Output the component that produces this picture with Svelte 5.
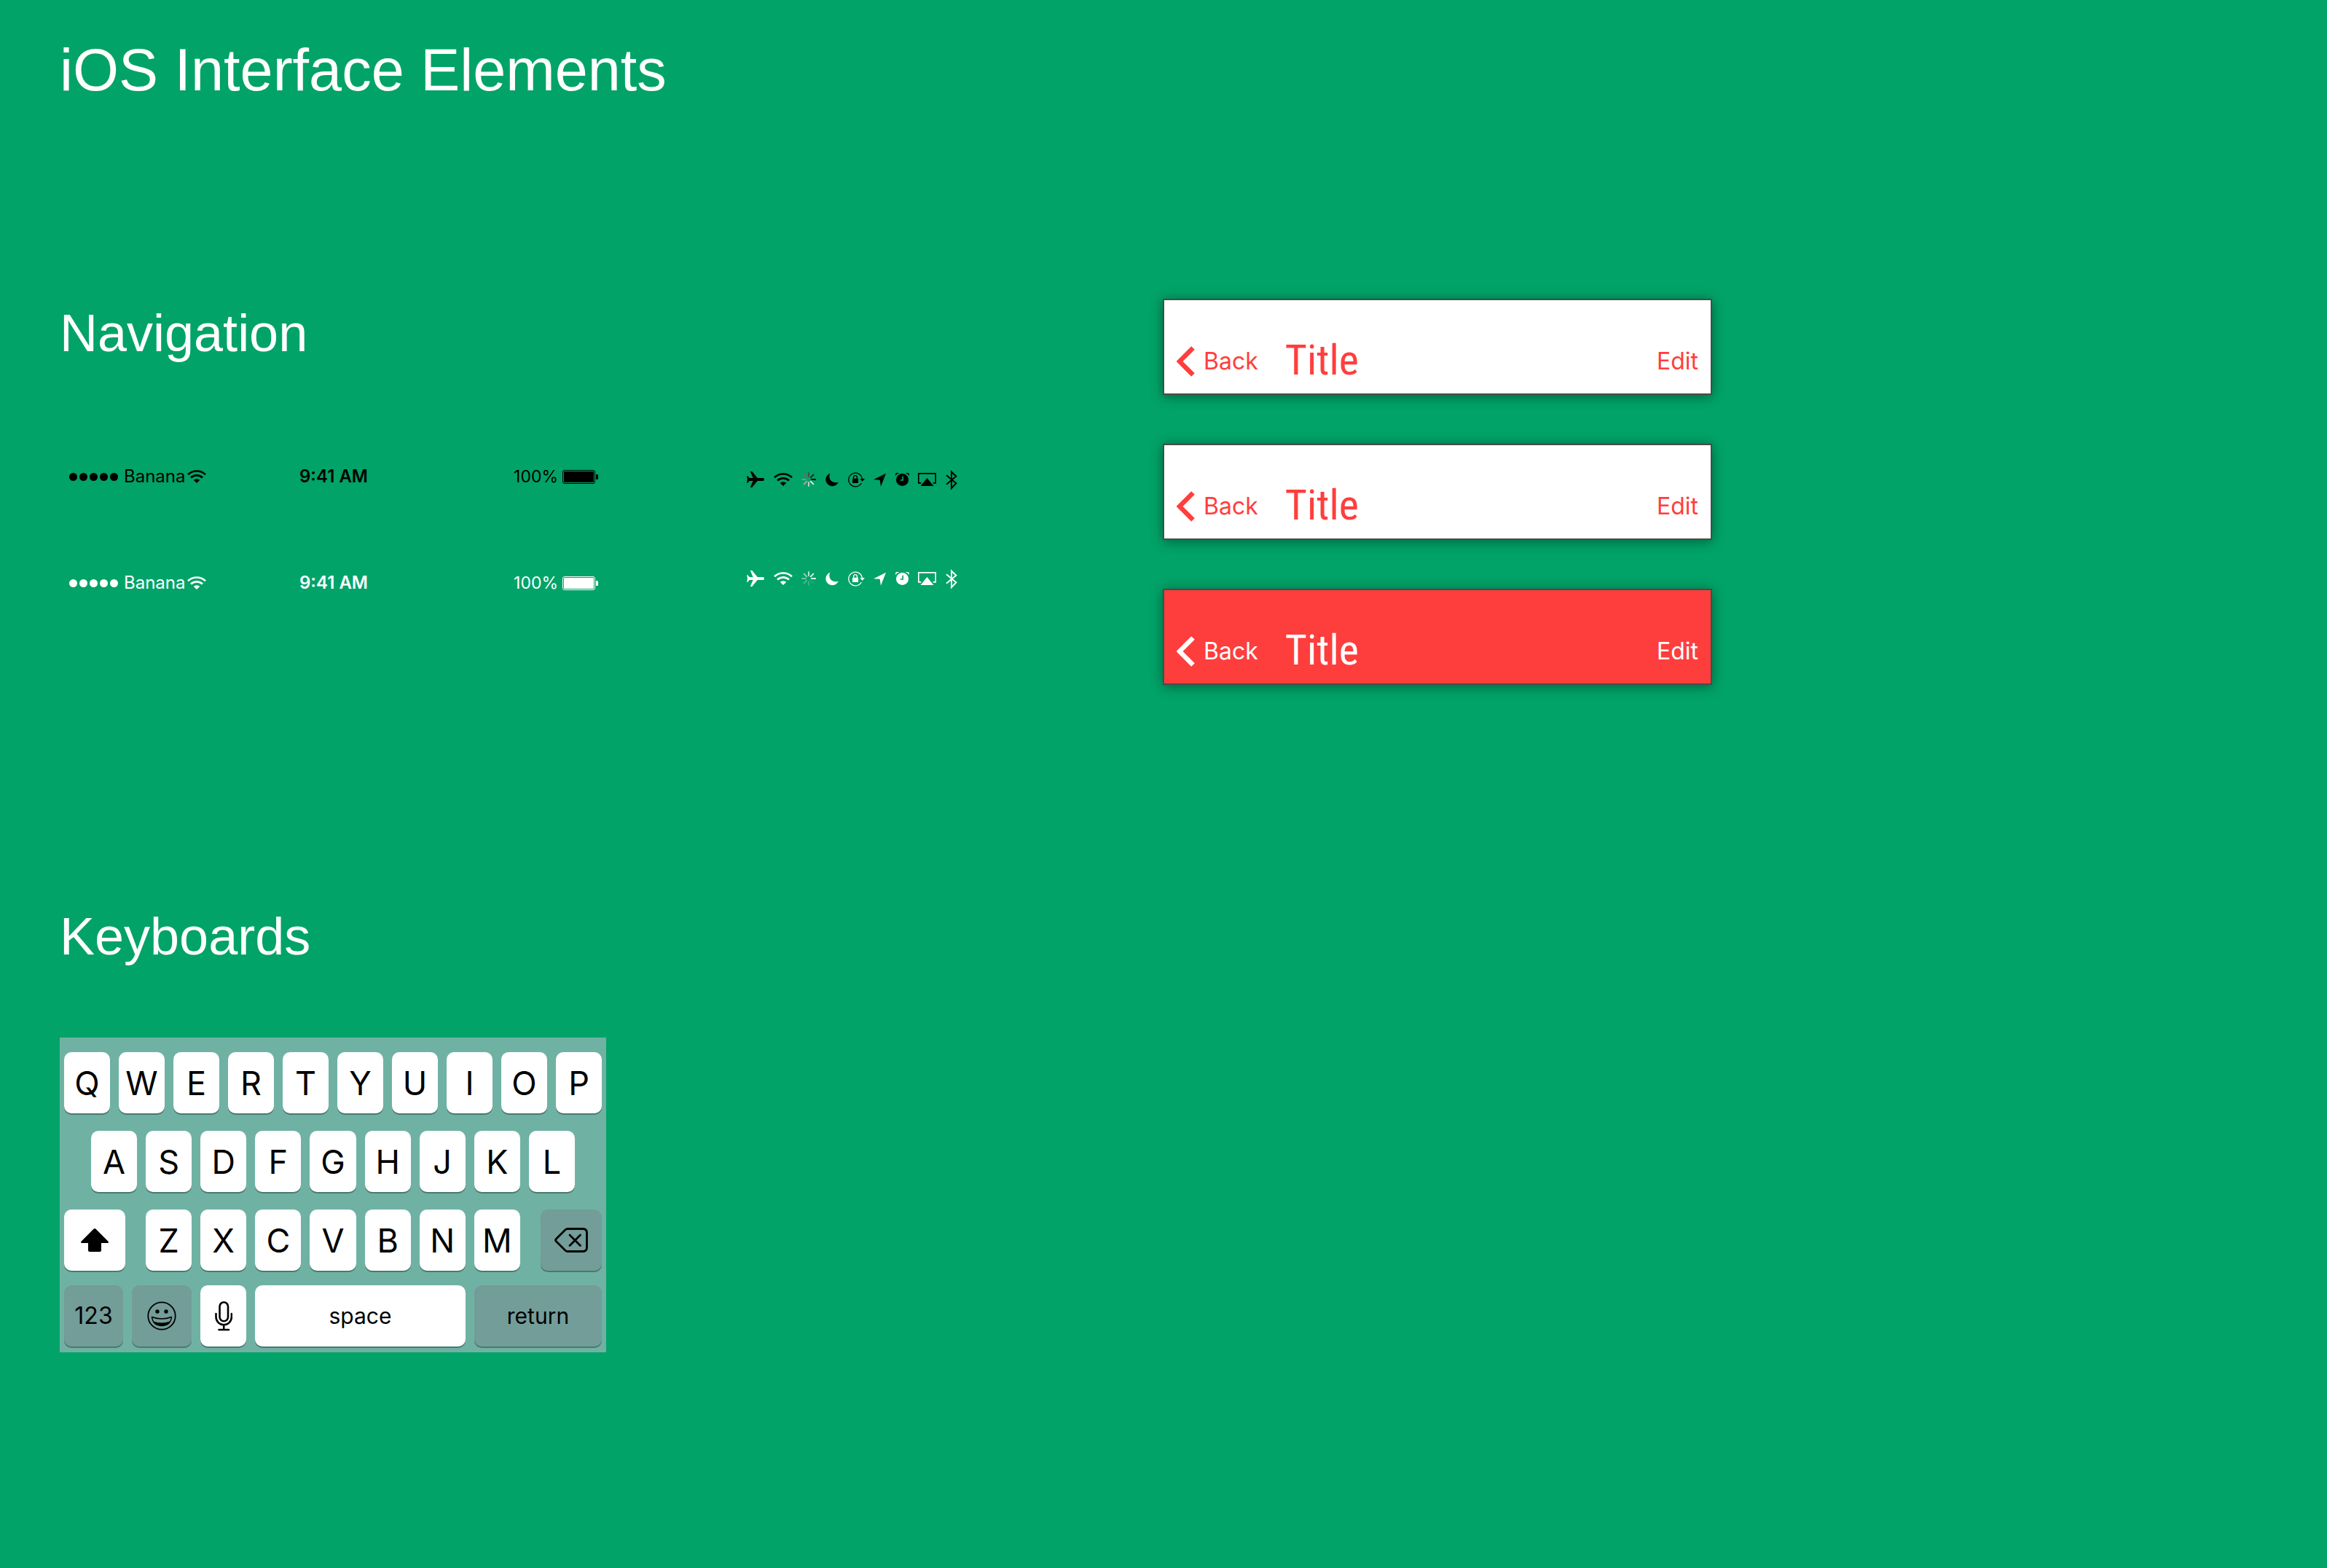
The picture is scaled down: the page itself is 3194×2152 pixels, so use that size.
<script>
  const themes = ['dark', 'light'];
  const bars = ['plain', 'plain', 'filled'];
  const topRow = [...'QWERTYUIOP'];
  const homeRow = [...'ASDFGHJKL'];
  const bottomRow = [...'ZXCVBNM'];

  // Spinner spokes, clockwise from the top
  const spokes = {
    dark: ['#4b4b4b', '#262626', '#000000', '#e4e4e4', '#c6c6c6', '#a8a8a8', '#8a8a8a', '#6c6c6c'],
    light: ['#ffffffb3', '#ffffffd9', '#ffffff', '#ffffff1a', '#ffffff33', '#ffffff4d', '#ffffff66', '#ffffff8c'],
  };
</script>

{#snippet wifi()}
  <svg class="icon" width="26" height="32" viewBox="153 36 78 96" aria-hidden="true">
    <path d="M156 76a52 52 0 0 1 72 0" fill="none" stroke="currentColor" stroke-width="8" />
    <path d="M168 88.500a35 35 0 0 1 48 0" fill="none" stroke="currentColor" stroke-width="8" />
    <path d="M192 111l-13-12.500q13-10 26 0z" fill="currentColor" />
  </svg>
{/snippet}

<main>
  <h1>iOS Interface Elements</h1>

  <section class="navigation">
    <div class="statuses">
      <h2>Navigation</h2>
      <div class="samples">
        <div class="status-list">
          {#each themes as theme}
            <div class="status {theme}">
              <div class="carrier">
                <span class="dots"><i></i><i></i><i></i><i></i><i></i></span>
                <span>Banana</span>
                {@render wifi()}
              </div>
              <time>9:41 AM</time>
              <div class="power">
                <span>100%</span>
                <svg width="49" height="19" viewBox="0 0 49 19" aria-hidden="true">
                  <rect x="0.500" y="0.500" width="44" height="18" rx="2.500" fill="none" stroke="currentColor" />
                  <rect x="2" y="2" width="41" height="15" rx="1" fill="currentColor" />
                  <path d="M46 6h1.500q1.500 0 1.500 1.500v4q0 1.500-1.500 1.500h-1.500z" fill="currentColor" />
                </svg>
              </div>
            </div>
          {/each}
        </div>

        <div class="icon-list">
          {#each themes as theme}
            <div class="icons {theme}">
              <svg class="icon" width="24" height="32" viewBox="45 36 72 96" aria-hidden="true">
                <path fill="currentColor" d="M45 70h4l7 8h15l-11-25v-2h7l22 27h22q6 0 6 6t-6 6h-22l-22 27h-7v-2l11-25h-15l-7 8h-4l3-14z" />
              </svg>
              {@render wifi()}
              <svg class="icon" width="20" height="32" viewBox="270 36 60 96" aria-hidden="true">
                {#each spokes[theme] as colour, i}
                  <path d="M300 72v-15" stroke={colour} stroke-width="6" stroke-linecap="round" transform="rotate({i * 45} 300 84)" />
                {/each}
              </svg>
              <svg class="icon" width="18" height="32" viewBox="365 36 54 96" aria-hidden="true">
                <path fill="currentColor" d="M384 59a27 27 0 1 0 34 36q-20 6-32-8-9-12-2-28z" />
              </svg>
              <svg class="icon" width="23" height="32" viewBox="459 36 69 96" aria-hidden="true">
                <path d="M514 99a28 28 0 1 1 3-18" fill="none" stroke="currentColor" stroke-width="4" />
                <path d="M508 81h20l-10 12z" fill="currentColor" />
                <rect x="477" y="80" width="24" height="19" rx="1" fill="currentColor" />
                <path d="M482 81v-6a7 7 0 0 1 14 0v6" fill="none" stroke="currentColor" stroke-width="4" />
              </svg>
              <svg class="icon" width="17" height="32" viewBox="567 36 51 96" aria-hidden="true">
                <path fill="currentColor" d="M618 59l-21 54-4-27-26-1z" />
              </svg>
              <svg class="icon" width="19" height="32" viewBox="657 36 57 96" aria-hidden="true">
                <path fill="currentColor" fill-rule="evenodd" d="M685.500 60a25.500 25.500 0 1 0 .1 0zM685 71h5v18h-13v-4h8z" />
                <path fill="currentColor" d="M657 69v-5q0-7 7-7h10q-11 3-17 12zM714 69v-5q0-7-7-7h-10q11 3 17 12z" />
              </svg>
              <svg class="icon" width="25" height="32" viewBox="750 36 75 96" aria-hidden="true">
                <path d="M763 98.500h-10.500v-39h70v39h-10.500" fill="none" stroke="currentColor" stroke-width="5" />
                <path d="M787.500 78l27 33h-54z" fill="currentColor" />
              </svg>
              <svg class="icon" width="16" height="32" viewBox="864 36 48 96" aria-hidden="true">
                <path d="M867 67l40 33-19 20v-67l19 18-40 33" fill="none" stroke="currentColor" stroke-width="6" />
              </svg>
            </div>
          {/each}
        </div>
      </div>
    </div>

    <div class="navbars">
      {#each bars as variant}
        <nav class="navbar {variant}" aria-label="Title bar">
          <button class="back">
            <svg width="26" height="42" viewBox="0 0 26 42" aria-hidden="true">
              <path d="M22.500 2.500L4 21l18.500 18.500" fill="none" stroke="currentColor" stroke-width="6.500" />
            </svg>
            Back
          </button>
          <h3>Title</h3>
          <button class="edit">Edit</button>
        </nav>
      {/each}
    </div>
  </section>

  <section class="keyboards">
    <h2>Keyboards</h2>
    <div class="keyboard">
      <div class="row">
        {#each topRow as key}<button class="key letter">{key}</button>{/each}
      </div>
      <div class="row home">
        {#each homeRow as key}<button class="key letter">{key}</button>{/each}
      </div>
      <div class="row third">
        <button class="key wide" aria-label="Shift">
          <svg width="38" height="32" viewBox="0 0 38 32" aria-hidden="true">
            <path fill="currentColor" d="M17.700.600q1.300-1.100 2.600 0l17.200 17.200q1.200 2.200-.700 2.200H28v10q0 2-2 2H12q-2 0-2-2V20H1.200q-1.900 0-.700-2.200z" />
          </svg>
        </button>
        <div class="letters">
          {#each bottomRow as key}<button class="key letter">{key}</button>{/each}
        </div>
        <button class="key wide muted" aria-label="Delete">
          <svg width="46" height="34" viewBox="0 0 46 34" aria-hidden="true">
            <g fill="none" stroke="currentColor" stroke-width="2.800" stroke-linecap="round" stroke-linejoin="round">
              <path d="M18 1.500h21q5.500 0 5.500 5.500v20q0 5.500-5.500 5.500h-21q-1.500 0-3-1.300l-13-13q-1-1.200 0-2.400l13-13q1.500-1.300 3-1.300z" />
              <path d="M21 10l14.500 14.500M35.500 10L21 24.500" />
            </g>
          </svg>
        </button>
      </div>
      <div class="row fourth">
        <button class="key muted digits">123</button>
        <button class="key muted" aria-label="Emoji">
          <svg width="40" height="40" viewBox="0 0 40 40" aria-hidden="true">
            <circle cx="20" cy="20" r="18.700" fill="none" stroke="currentColor" stroke-width="1.800" />
            <circle cx="14" cy="14" r="2.700" fill="currentColor" />
            <circle cx="26" cy="14" r="2.700" fill="currentColor" />
            <path d="M6.500 21.500q13.500 5 27 0-1.500 12-13.500 12t-13.500-12z" fill="none" stroke="currentColor" stroke-width="1.500" stroke-linejoin="round" />
            <path d="M8.500 27.500q11.500 4 23 0-4 6-11.500 6t-11.500-6z" fill="currentColor" />
          </svg>
        </button>
        <button class="key" aria-label="Dictate">
          <svg width="24" height="42" viewBox="0 0 24 42" aria-hidden="true">
            <g fill="none" stroke="currentColor" stroke-width="2.600" stroke-linecap="round">
              <rect x="6.500" y="2.300" width="11.500" height="26" rx="5.750" />
              <path d="M1.500 18v4.500a10.700 10.700 0 0 0 21.400 0V18M12.200 33.500v6M5.500 40h13.500" />
            </g>
          </svg>
        </button>
        <button class="key text">space</button>
        <button class="key muted text">return</button>
      </div>
    </div>
  </section>
</main>

<style>
  :global(body) {
    margin: 0;
    background: #01a368;
  }

  main {
    box-sizing: border-box;
    min-height: 100vh;
    padding: 48px 82px;
    color: #fff;
    font-family: Inter, 'Liberation Sans', sans-serif;
  }

  h1,
  h2,
  h3 {
    margin: 0;
    font-weight: 400;
  }

  h1 {
    font: 400 81px/96px 'Liberation Sans', sans-serif;
  }

  h2 {
    font: 400 72px/84px 'Liberation Sans', sans-serif;
  }

  button {
    margin: 0;
    padding: 0;
    border: 0;
    background: none;
    color: inherit;
    font: inherit;
    cursor: pointer;
  }

  svg {
    display: block;
    flex: none;
  }

  .navigation {
    display: flex;
    gap: 282px;
    margin-top: 266px;
  }

  .statuses {
    padding-top: 5px;
  }

  .samples {
    display: flex;
    gap: 193px;
    margin-top: 135px;
  }

  .status-list {
    display: flex;
    flex-direction: column;
    gap: 106px;
    width: 750px;
  }

  .status {
    display: grid;
    grid-template-columns: 1fr auto 1fr;
    align-items: center;
    height: 40px;
    padding: 0 11px 0 13px;
    font-size: 24px;
    line-height: 40px;
  }

  .dark {
    color: #000;
  }

  .light {
    color: #fff;
  }

  .carrier {
    display: flex;
    align-items: center;
  }

  .carrier .icon {
    margin-left: 2px;
  }

  .dots {
    display: flex;
    gap: 3px;
    margin-right: 8px;
  }

  .dots i {
    width: 11px;
    height: 11px;
    border-radius: 50%;
    background: currentColor;
  }

  time {
    font-weight: 600;
  }

  .power {
    display: flex;
    align-items: center;
    justify-content: flex-end;
    gap: 6px;
    font-size: 23px;
  }

  .icon-list {
    display: flex;
    flex-direction: column;
    gap: 96px;
    width: 289px;
    padding-top: 4px;
  }

  .icons {
    display: flex;
    align-items: center;
    justify-content: space-between;
    height: 40px;
  }

  .navbars {
    display: flex;
    flex-direction: column;
    gap: 67px;
    width: 754px;
  }

  .navbar {
    display: flex;
    align-items: flex-end;
    box-sizing: border-box;
    height: 132px;
    padding: 0 17px 16px;
    border: 2px solid #4a4a4a;
    background: #fff;
    color: #ff3e3d;
    font-size: 32px;
    line-height: 56px;
    box-shadow: 0 2px 16px rgb(0 0 0 / 40%);
  }

  .filled {
    background: #fe3e3c;
    color: #fff;
  }

  .back {
    display: flex;
    align-items: center;
    gap: 11px;
  }

  h3 {
    flex: 1;
    margin-left: 37px;
    font: 400 58px/60px 'Ubuntu Condensed', 'Roboto Condensed', 'DejaVu Sans Condensed', sans-serif;
  }

  .keyboards {
    margin-top: 303px;
  }

  .keyboard {
    display: flex;
    flex-direction: column;
    gap: 24px;
    box-sizing: border-box;
    width: 750px;
    margin-top: 97px;
    padding: 20px 6px 8px;
    background: #6fb2a4;
    color: #000;
  }

  .row,
  .letters {
    display: grid;
    grid-auto-flow: column;
    grid-auto-columns: 1fr;
    gap: 12px;
  }

  .home {
    padding: 0 37px;
  }

  .third {
    grid-auto-flow: row;
    grid-template-columns: 84px 1fr 84px;
    gap: 28px;
  }

  .fourth {
    grid-auto-flow: row;
    grid-template-columns: 81px 82px 63px 1fr 175px;
    margin-top: -4px;
  }

  .key {
    display: flex;
    align-items: center;
    justify-content: center;
    height: 84px;
    border-radius: 10px;
    background: #fff;
    box-shadow: 0 2px 0 #4a796d;
  }

  .muted {
    background: #739d98;
  }

  .letter {
    padding-top: 2px;
    font-size: 45px;
    line-height: 80px;
  }

  .text {
    font-size: 30px;
    line-height: 80px;
  }

  .digits {
    font-size: 32px;
    line-height: 80px;
  }
</style>
